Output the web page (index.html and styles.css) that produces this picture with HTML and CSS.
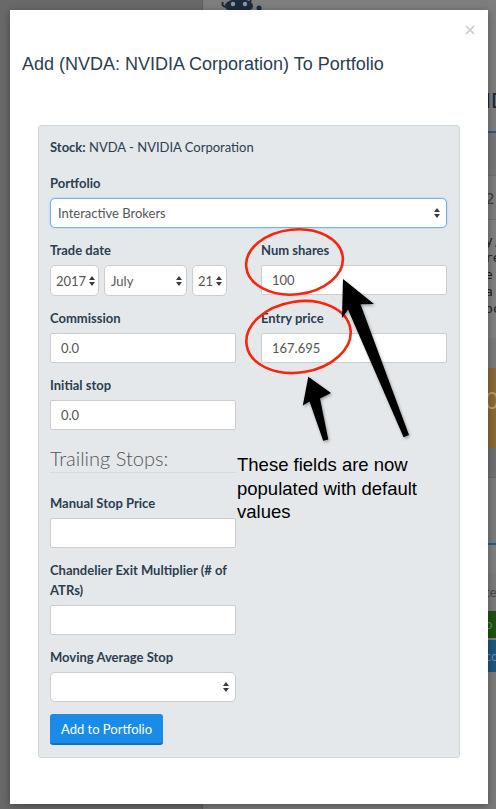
FILE: index.html
```html
<!DOCTYPE html>
<html>
<head>
<meta charset="utf-8">
<link rel="stylesheet" href="styles.css">
</head>
<body>
<div class="page">
  <aside class="side"></aside>
  <main class="main">
    <div class="topbar">
      <svg class="logo" width="44" height="12" viewBox="0 0 44 12">
        <path d="M2 2 Q0 6 5 7" fill="none" stroke="#1d2b3d" stroke-width="2"/>
        <path d="M27 6 L30 0" fill="none" stroke="#1d2b3d" stroke-width="2"/>
        <ellipse cx="18" cy="6" rx="14" ry="7" fill="#1d2b3d"/>
        <circle cx="12" cy="4" r="2.2" fill="#8d97a3"/>
        <circle cx="24" cy="4" r="2.2" fill="#8d97a3"/>
        <circle cx="38" cy="8" r="2.5" fill="#1d2b3d"/>
      </svg>
    </div>
    <div class="strip ticker">ID</div>
    <div class="bline"></div>
    <div class="strip s1"></div>
    <div class="strip s2">2</div>
    <div class="strip txt">y,<br>re<br>e<br>a<br>oc</div>
    <div class="strip s3"></div>
    <div class="strip orange">0</div>
    <div class="strip s4"></div>
    <div class="strip s5"></div>
    <div class="bline"></div>
    <div class="strip s6"></div>
    <div class="strip s7">te</div>
    <div class="strip green">o</div>
    <div class="strip blue">co</div>
    <div class="strip s8"></div>
  </main>
</div>

<div class="modal">
  <svg class="close" width="10" height="10" viewBox="0 0 10 10">
    <path d="M1 1 L9 9 M9 1 L1 9" stroke="#c9c9c9" stroke-width="1.6" fill="none"/>
  </svg>
  <h4 class="title">Add (NVDA: NVIDIA Corporation) To Portfolio</h4>
  <div class="modal-body">
    <div class="well">
      <p class="stock"><b>Stock:</b> NVDA - NVIDIA Corporation</p>
      <div class="group">
        <label class="label">Portfolio</label>
        <div class="select focus"><span>Interactive Brokers</span>
          <svg class="arr" width="6" height="10" viewBox="0 0 6 10"><path d="M0 4 L3 0 L6 4Z M0 6 L3 10 L6 6Z" fill="#3a3a3a"/></svg>
        </div>
      </div>
      <div class="grid">
        <div class="group">
          <label class="label">Trade date</label>
          <div class="dates">
            <div class="select date yr"><span>2017</span>
              <svg class="arr" width="6" height="10" viewBox="0 0 6 10"><path d="M0 4 L3 0 L6 4Z M0 6 L3 10 L6 6Z" fill="#3a3a3a"/></svg>
            </div>
            <div class="select date mo"><span>July</span>
              <svg class="arr" width="6" height="10" viewBox="0 0 6 10"><path d="M0 4 L3 0 L6 4Z M0 6 L3 10 L6 6Z" fill="#3a3a3a"/></svg>
            </div>
            <div class="select date dy"><span>21</span>
              <svg class="arr" width="6" height="10" viewBox="0 0 6 10"><path d="M0 4 L3 0 L6 4Z M0 6 L3 10 L6 6Z" fill="#3a3a3a"/></svg>
            </div>
          </div>
        </div>
        <div class="group">
          <label class="label">Num shares</label>
          <div class="input">100</div>
        </div>
        <div class="group">
          <label class="label">Commission</label>
          <div class="input">0.0</div>
        </div>
        <div class="group">
          <label class="label">Entry price</label>
          <div class="input">167.695</div>
        </div>
      </div>
      <div class="leftcol">
        <div class="group">
          <label class="label">Initial stop</label>
          <div class="input">0.0</div>
        </div>
        <div class="legend">Trailing Stops:</div>
        <div class="group">
          <label class="label">Manual Stop Price</label>
          <div class="input"></div>
        </div>
        <div class="group">
          <label class="label">Chandelier Exit Multiplier (# of ATRs)</label>
          <div class="input"></div>
        </div>
        <div class="group">
          <label class="label">Moving Average Stop</label>
          <div class="select"><span></span>
            <svg class="arr" width="6" height="10" viewBox="0 0 6 10"><path d="M0 4 L3 0 L6 4Z M0 6 L3 10 L6 6Z" fill="#3a3a3a"/></svg>
          </div>
        </div>
        <button class="btn">Add to Portfolio</button>
      </div>
    </div>
  </div>
</div>

<div class="annot">
  <svg class="marks" width="496" height="809" viewBox="0 0 496 809">
    <defs>
      <filter id="sh" x="-30%" y="-30%" width="160%" height="160%">
        <feDropShadow dx="1" dy="1.5" stdDeviation="1.5" flood-color="#000" flood-opacity="0.35"/>
      </filter>
    </defs>
    <ellipse cx="294.5" cy="262" rx="48.5" ry="32.5" transform="rotate(-6 294.5 262)" fill="none" stroke="#f5260c" stroke-width="2.6"/>
    <ellipse cx="298.5" cy="337" rx="52.5" ry="35.5" transform="rotate(-9 298.5 337)" fill="none" stroke="#f5260c" stroke-width="2.6"/>
    <polygon filter="url(#sh)" fill="#050505" points="343,279 374,304 360.5,304.3 409,435 403.6,437.2 348,309.5 342,318"/>
    <polygon filter="url(#sh)" fill="#050505" points="308.3,376.7 331,393 320,398.4 328.3,439.4 323.2,440.7 309.5,401.4 302.8,405.5"/>
  </svg>
  <div class="note">These fields are now<br>populated with default<br>values</div>
</div>
</body>
</html>
```

FILE: styles.css
```css
* { box-sizing: border-box; }
html, body { margin: 0; padding: 0; }
body {
  width: 496px;
  height: 809px;
  overflow: hidden;
  position: relative;
  background: #7c7c7c;
  font-family: Lato, "Open Sans", sans-serif;
}

/* dimmed background page */
.page { display: flex; height: 809px; }
.side { width: 203px; flex: none; background: #696969; border-right: 1px solid #5f5f5f; }
.main { flex: 1; display: flex; flex-direction: column; background: #7e7e7e; overflow: hidden; }
.topbar { height: 85px; padding-left: 18px; }
.logo { display: block; }
.strip {
  padding-left: 282px;
  white-space: nowrap;
  overflow: hidden;
  color: #2a2f36;
  font-size: 14px;
  flex: none;
}
.ticker { height: 46px; font-size: 22px; line-height: 32px; color: #1c2838; font-family: "Liberation Sans", sans-serif; }
.bline { height: 2px; background: #2b5a86; flex: none; }
.s1 { height: 43px; background: #777777; border-bottom: 1px solid #6e6e6e; }
.s2 { height: 44px; line-height: 44px; background: #7d7d7d; color: #3c3c3c; font-size: 16px; border-bottom: 1px solid #707070; }
.txt { height: 118px; padding-top: 12px; font-family: "DejaVu Sans Mono", monospace; font-size: 13px; line-height: 17px; color: #222; background: #808080; }
.s3 { height: 30px; background: #7a7a7a; }
.orange { height: 80px; line-height: 64px; background: #8a6a35; color: #b79b70; font-size: 24px; }
.s4 { height: 30px; background: #707070; border-bottom: 1px solid #696969; }
.s5 { height: 65px; background: #7b7b7b; }
.s6 { height: 28px; background: #7f7f7f; }
.s7 { height: 38px; line-height: 38px; background: #7b7b7b; color: #464646; font-size: 13px; }
.green { height: 27px; line-height: 27px; background: #1e5210; color: #6a8a60; font-size: 13px; margin-bottom: 2px; }
.blue { height: 32px; line-height: 32px; background: #1e557f; color: #6a8aa8; font-size: 13px; }
.s8 { flex: 1; background: #7b7b7b; }

/* modal */
.modal {
  position: absolute;
  top: 10px;
  left: 10px;
  width: 478px;
  height: 794px;
  background: #fff;
  box-shadow: 0 2px 8px rgba(0, 0, 0, 0.35);
}
.close { position: absolute; left: 455px; top: 15px; }
.title {
  margin: 0;
  padding: 44px 12px 0;
  font-family: "Liberation Sans", Arial, sans-serif;
  font-size: 18px;
  line-height: 20px;
  font-weight: 400;
  color: #2c3e50;
}
.modal-body { padding: 51px 28px 0; }
.well {
  background: #e4e8eb;
  border: 1px solid #ced9dc;
  border-radius: 3px;
  padding: 11px 12px 12px 11px;
  color: #2c3e50;
  font-size: 13px;
}
.stock { margin: 0 0 16px; line-height: 20px; }
.stock b { font-weight: 700; }
.group { margin-bottom: 12px; }
.label {
  display: block;
  font-weight: 700;
  line-height: 20px;
  margin-bottom: 5px;
  font-size: 13px;
  color: #2c3e50;
}
.grid { display: grid; grid-template-columns: 186px 186px; column-gap: 25px; }
.leftcol { width: 186px; }
.input {
  height: 30px;
  border: 1px solid #cccccc;
  border-radius: 2px;
  background: #fff;
  padding: 0 10px;
  font-size: 13px;
  color: #555;
  display: flex;
  align-items: center;
}
.select {
  height: 30px;
  border: 1px solid #cccccc;
  border-radius: 5px;
  background: #fff;
  padding: 0 6px 0 7px;
  font-size: 13px;
  color: #555;
  display: flex;
  align-items: center;
  justify-content: space-between;
}
.select.focus { border-color: #74b3ea; box-shadow: 0 0 2px rgba(102, 175, 233, 0.6); }
.dates { display: flex; gap: 5px; }
.date { height: 31px; padding: 0 4px 0 6px; }
.yr { width: 49px; padding-left: 5px; padding-right: 3px; }
.mo { width: 83px; }
.dy { width: 35px; padding-left: 5px; }
.arr { flex: none; display: block; }
.legend {
  font-size: 20px;
  font-weight: 300;
  line-height: 28px;
  padding-top: 2px;
  color: #555;
  border-bottom: 1px solid #d7dbde;
  margin-bottom: 20px;
}
.btn {
  display: block;
  margin-top: 1px;
  height: 31px;
  padding: 0 11px;
  border: none;
  border-bottom: 2px solid #0f72c4;
  border-radius: 3px;
  background: #1a8ce8;
  color: #fff;
  font-family: Lato, sans-serif;
  font-size: 13px;
}

/* annotations */
.annot { position: absolute; top: 0; left: 0; width: 496px; height: 809px; pointer-events: none; }
.marks { position: absolute; top: 0; left: 0; }
.note {
  position: absolute;
  left: 237px;
  top: 453px;
  font-family: "Liberation Sans", Arial, sans-serif;
  font-size: 18.5px;
  line-height: 23.5px;
  color: #000;
}
```
